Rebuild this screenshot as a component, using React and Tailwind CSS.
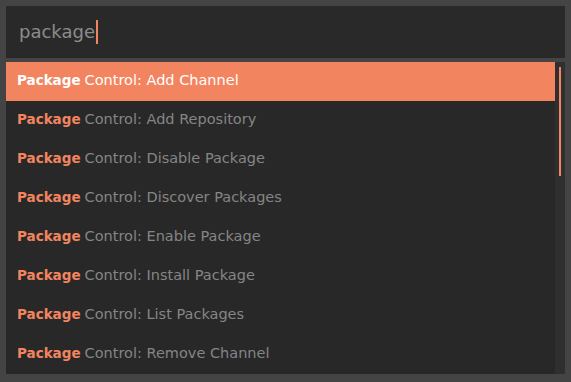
const items = [
  'Add Channel',
  'Add Repository',
  'Disable Package',
  'Discover Packages',
  'Enable Package',
  'Install Package',
  'List Packages',
  'Remove Channel',
];

export default function App() {
  return (
    <div className="w-[571px] h-[382px] bg-[#444444] p-[6px] pb-[8px] flex flex-col gap-[4px] font-['DejaVu_Sans',sans-serif]">
      <div className="h-[52px] bg-[#292929] flex items-center pl-[13px]">
        <span className="text-[18px] text-[#8c8c8c] leading-none">package</span>
        <span className="w-[2px] h-[24px] bg-[#f2845f] ml-[1px]" />
      </div>
      <div className="flex-1 flex bg-[#282828]">
        <div className="flex-1 flex flex-col">
          {items.map((t, i) => (
            <div
              key={t}
              className={
                'h-[39px] flex items-center pl-[11px] pb-[2px] text-[14.5px] ' +
                (i === 0 ? 'bg-[#f2845f] text-white' : 'text-[#858585]')
              }
            >
              <span className={'font-bold text-[13.5px] ' + (i === 0 ? 'text-white' : 'text-[#f2845f]')}>Package</span>
              <span className="ml-[4px]">Control: {t}</span>
            </div>
          ))}
        </div>
        <div className="w-[10px] bg-[#2f2f2f] pt-[5px] pl-[4px]">
          <div className="w-[2px] h-[109px] bg-[#f2845f]" />
        </div>
      </div>
    </div>
  );
}
